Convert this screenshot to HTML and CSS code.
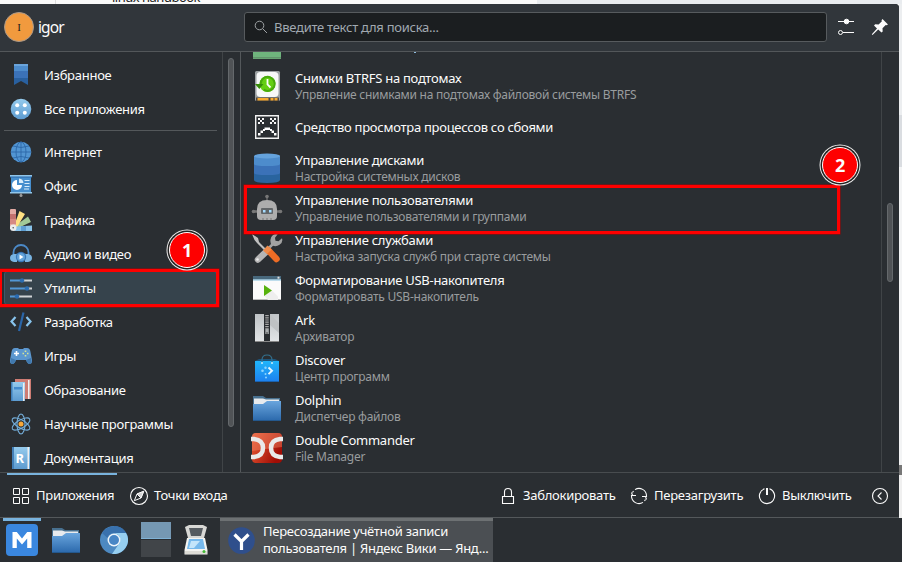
FILE: index.html
```html
<!DOCTYPE html>
<html lang="ru">
<head>
<meta charset="utf-8">
<title>Меню приложений</title>
<link rel="stylesheet" href="styles.css">
</head>
<body>
<svg width="0" height="0" class="defs">
  <defs>
    <linearGradient id="blue" x1="0" y1="0" x2="0" y2="1"><stop offset="0" stop-color="#69a5dd"/><stop offset="1" stop-color="#2a68ab"/></linearGradient>
    <linearGradient id="sky" x1="0" y1="0" x2="0" y2="1"><stop offset="0" stop-color="#95cbed"/><stop offset="1" stop-color="#5d9bd0"/></linearGradient>
    <linearGradient id="bag" x1="0" y1="0" x2="0" y2="1"><stop offset="0" stop-color="#20b5fb"/><stop offset="1" stop-color="#1d80ee"/></linearGradient>
    <linearGradient id="red" x1="0" y1="0" x2="1" y2="0.5"><stop offset="0" stop-color="#ec5e38"/><stop offset="1" stop-color="#a10d05"/></linearGradient>
    <linearGradient id="metal" x1="0" y1="0" x2="0" y2="1"><stop offset="0" stop-color="#bfc3c6"/><stop offset="1" stop-color="#e2e5e7"/></linearGradient>
    <symbol id="folder" viewBox="0 0 32 32">
      <path d="M2 4h10l3 2h14v8H2z" fill="#48708f"/>
      <path d="M3 6.500h9l3 1h13V14H3z" fill="#e8ebee"/>
      <path d="M2 12h10l4-3h14v20H2z" fill="url(#blue)"/>
      <path d="M2 28h28v1H2z" fill="#24588d"/>
    </symbol>
  </defs>
</svg>
<div class="screen">
  <div class="page"><div class="page-left"></div><div class="page-mid"><span class="bullet">•</span>linux handbook</div><div class="page-right"></div></div>
  <div class="desk">
    <main class="launcher">
      <header class="head">
        <div class="avatar">I</div>
        <div class="user">igor</div>
        <div class="search">
          <svg width="14" height="14" viewBox="0 0 14 14" fill="none" stroke="#a0a4a6"><circle cx="5.500" cy="5.500" r="4.300"/><path d="M8.700 8.700l4.300 4.300"/></svg>
          <span>Введите текст для поиска...</span>
        </div>
        <svg class="tune" width="18" height="18" viewBox="0 0 18 18" fill="none" stroke="#fcfcfc"><path d="M1 3.500h16M6 14.500h11"/><circle cx="9.500" cy="3.500" r="2.300" fill="#fcfcfc"/><circle cx="3.500" cy="14.500" r="2"/></svg>
        <svg class="pin" width="18" height="18" viewBox="0 0 18 18"><path d="M11.500 1l5.500 5.500-1.500.8-.8-.4-3.200 3.400.2 3.200-1.200 1.100-3.300-3.200L1.500 17l-.7-.7 5.200-5.800L3 7.500l1.200-1.200 3.400.2 3.300-3.300-.4-.9z" fill="#fcfcfc"/></svg>
      </header>
      <div class="content">
        <nav class="cats">
          <div class="cat"><svg viewBox="0 0 22 22"><path d="M4 0h14v21l-7-4-7 4z" fill="#29609f"/><path d="M4 0h14v14H4z" fill="#3b72b8"/><path d="M4 0h14v7H4z" fill="#4d8ccc"/><path d="M4 0h14v2H4z" fill="#6aa4db"/></svg>Избранное</div>
          <div class="cat"><svg viewBox="0 0 22 22"><circle cx="11" cy="11" r="10.300" fill="url(#sky)"/><g fill="#fff"><circle cx="7.200" cy="7.200" r="2"/><circle cx="14.800" cy="7.200" r="2"/><circle cx="7.200" cy="14.800" r="2"/><circle cx="14.800" cy="14.800" r="2"/></g></svg>Все приложения</div>
          <hr>
          <div class="cat"><svg viewBox="0 0 22 22"><circle cx="11" cy="11" r="10.300" fill="#5295d2"/><g fill="none" stroke="#2d68a8" stroke-width=".9"><ellipse cx="11" cy="11" rx="5" ry="10"/><path d="M11 1v20M1 11h20M3 5q8 3 16 0M3 17q8-3 16 0"/></g></svg>Интернет</div>
          <div class="cat"><svg viewBox="0 0 22 22"><path d="M1 1h20v17H1z" fill="#478fce"/><path d="M0 0h22v2H0zM0 17h22v1.500H0z" fill="#91c6ea"/><path d="M0 1.500h22v1H0z" fill="#2d68a8"/><path d="M7 5a5 5 0 1 0 5 5H7z" fill="#fff"/><path d="M9 3.500a5 5 0 0 1 4.500 4.500H9z" fill="#d8ecfa"/><path d="M14.500 5.500h5M14.500 8.500h5M14.500 11.500h5M14 14h5" stroke="#d8ecfa"/><path d="M11 18v3" stroke="#999"/><circle cx="11" cy="20.500" r="1.500" fill="#999"/></svg>Офис</div>
          <div class="cat"><svg viewBox="0 0 22 22"><path d="M5 17L18 7.500l3 5.500-15 7z" fill="#a2c997"/><path d="M4 17L9.500 2l5.500 3L6 20z" fill="#ffe082"/><path d="M4 22l2-4.500 16-1V22z" fill="#88c2e9"/><path d="M11 17h5v5h-5z" fill="#5f9fd3"/><path d="M0 1q0-1 1-1h4q1 0 1 1v17H0z" fill="#e2aaa3"/><path d="M0 5h6v5H0z" fill="#c3716e"/><path d="M0 10h6v5H0z" fill="#d68983"/><circle cx="3.200" cy="18.700" r="3.300" fill="#ececec"/><circle cx="3.200" cy="18.700" r=".8" fill="#555"/></svg>Графика</div>
          <div class="cat"><svg viewBox="0 0 22 22"><path d="M3.500 14V9.500a7.500 7.500 0 0 1 15 0V14" fill="none" stroke="#4b89c7" stroke-width="1.800"/><path d="M4 11h3v8H4q-4-.5-4-4t4-4M18 11h-3v8h3q4-.5 4-4t-4-4" fill="#79b4e2"/><circle cx="11" cy="14" r="5.200" fill="#3877b8"/><circle cx="11" cy="14" r="4" fill="#62a2d8"/><path d="M9.500 11.500v5L13.500 14z" fill="#fff"/></svg>Аудио и видео</div>
          <div class="cat active"><svg viewBox="0 0 22 22"><path d="M0 3.500h12M0 11.500h18M0 19.500h8" stroke="#5297d5" stroke-width="1.800"/><path d="M12 3.500h10M18 11.500h4M8 19.500h14" stroke="#cfd3d5" stroke-width="1.800"/><g fill="#2a6bb0"><circle cx="12" cy="3.500" r="2.200"/><circle cx="17" cy="11.500" r="2.200"/><circle cx="7" cy="19.500" r="2.200"/></g></svg>Утилиты</div>
          <div class="cat"><svg viewBox="0 0 22 22" fill="none"><path d="M5.500 6L1.500 10.500l4 4.500M16.500 6l4 4.500-4 4.500" stroke="#88c4ed" stroke-width="2.200"/><path d="M13.500 1.500L9 20" stroke="#2a66a9" stroke-width="2.200"/></svg>Разработка</div>
          <div class="cat"><svg viewBox="0 0 22 22"><path d="M5 3h3l1 1h4l1-1h3q3 0 3.500 4L22 15q.5 4-2.500 4-2 0-3.500-4H6q-1.500 4-3.500 4-3 0-2.500-4L1.500 7Q2 3 5 3" fill="#5c97cf"/><path d="M1 13l-.7 4q.5 2 2.200 2 2 0 3.500-4zM21 13l.7 4q-.5 2-2.200 2-2 0-3.500-4z" fill="#4179ad"/><path d="M6.500 6v5M4 8.500h5" stroke="#fff" stroke-width="1.600"/><path d="M15.500 5.500v1.500M15.500 10v1.500M12.500 8.500H14M17 8.500h1.500" stroke="#d5e495" stroke-width="1.600"/></svg>Игры</div>
          <div class="cat"><svg viewBox="0 0 22 22"><path d="M5 0h16v20H5z" fill="#ce7c73"/><path d="M18 1h1.500v19H18z" fill="#eee"/><path d="M1 3h14v19H1z" fill="url(#sky)"/><path d="M1 3h1.500v19H1z" fill="#3f7fb9"/><path d="M13 4h1.500v18H13z" fill="#eee"/><path d="M4 8h8v2.500H4z" fill="#438bce"/></svg>Образование</div>
          <div class="cat"><svg viewBox="0 0 22 22" fill="none" stroke="#75afdb" stroke-width="1.100"><g><ellipse cx="11" cy="11" rx="4" ry="10"/><ellipse cx="11" cy="11" rx="4" ry="10" transform="rotate(60 11 11)"/><ellipse cx="11" cy="11" rx="4" ry="10" transform="rotate(120 11 11)"/></g><circle cx="11" cy="11" r="2.500" fill="#f8a838" stroke="none"/></svg>Научные программы</div>
          <div class="cat"><svg viewBox="0 0 22 22"><path d="M2 0h18v22H2z" fill="url(#sky)"/><path d="M2 0h2v22H2z" fill="#427fb8"/><path d="M17.500 0H19v22h-1.500z" fill="#eee"/><text x="5.500" y="16" class="letter">R</text></svg>Документация</div>
        </nav>
        <div class="track left-track"><i></i></div>
        <section class="apps">
          <div class="app before"><svg viewBox="0 0 32 32"><path d="M2 4h28v25H2z" fill="#6fb47d"/><path d="M2 27h28v1.500H2z" fill="#62946c"/></svg><i class="tail"></i></div>
          <div class="app"><svg viewBox="0 0 32 32"><rect x="4" y="1" width="25" height="30" rx="1.500" fill="#9ba0a2"/><rect x="5.500" y="2" width="22" height="25" rx="4" fill="#f7f8f8"/><circle cx="16.500" cy="14" r="8" fill="#65cf13"/><path d="M9.700 14a7 7 0 1 1 3 5.600" fill="none" stroke="#48aa0d" stroke-width="2"/><path d="M4 14h8.500l-4.200 5z" fill="#378d08"/><path d="M16.500 9v5.500l3 3" fill="none" stroke="#fff" stroke-width="1.800"/><path d="M5 27.500h23V31H5z" fill="#4d453c"/><path d="M6.500 29.300h20" stroke="#f6aa30" stroke-width="2.500" stroke-dasharray="11 2 3 1"/></svg><div><b>Снимки BTRFS на подтомах</b><small>Упрвление снимками на подтомах файловой системы BTRFS</small></div></div>
          <div class="app single"><svg viewBox="0 0 32 32"><path d="M4.700 4.700h22.600v22.600H4.700z" fill="#2a2e32" stroke="#f1f1f1" stroke-width="1.400"/><g fill="#f5f5f5"><path id="x" d="M7 7h2v2H7zM11 7h2v2h-2zM9 9h2v2H9zM7 11h2v2H7zM11 11h2v2h-2z"/><use href="#x" x="12"/></g><path d="M7 22h2.500v2.500H7zM9.500 19.500H12V22H9.500zM12 18h2v2h-2zM13.500 16.500h5.500V19h-5.500zM19 18h2v2h-2zM20.500 19.500H23V22h-2.500zM23 22h2.500v2.500H23z" fill="#fff"/></svg><div><b>Средство просмотра процессов со сбоями</b></div></div>
          <div class="app"><svg viewBox="0 0 32 32"><path d="M3 4v24q0 3 13 3t13-3V4z" fill="#29649f"/><path d="M3 4v17q0 2 13 2t13-2V4z" fill="#3b72b8"/><path d="M3 4v8q0 2 13 2t13-2V4z" fill="#4d8ccc"/><ellipse cx="16" cy="4" rx="13" ry="2.500" fill="#65a3dd"/></svg><div><b>Управление дисками</b><small>Настройка системных дисков</small></div></div>
          <div class="app"><svg viewBox="0 0 32 32"><path d="M16 4v6" stroke="#777" stroke-width="1.200"/><circle cx="16" cy="4.500" r="1.800" fill="#777"/><path d="M3 19.500h26" stroke="#777" stroke-width="2.500"/><circle cx="2.500" cy="19.500" r="1.800" fill="#777"/><circle cx="29.500" cy="19.500" r="1.800" fill="#777"/><path d="M6 17q0-9 10-9t10 9v7q0 4-4 4H10q-4 0-4-4z" fill="#adadad"/><path d="M12 28v-2M16 28v-2M20 28v-2" stroke="#777"/><rect x="10" y="16" width="12" height="6" rx="1" fill="#626669"/><path d="M12 18h2.500v2.500H12zM18 18h2.500v2.500H18z" fill="#a4dcff"/></svg><div><b>Управление пользователями</b><small>Управление пользователями и группами</small></div></div>
          <div class="app"><svg viewBox="0 0 32 32" fill="none"><path d="M1 2l6 4 1 4 7 7-1.500 1.500L6 11 3.500 8z" fill="#c0c0c0"/><path d="M17 18l-10 9.500" stroke="#b5b5b5" stroke-width="6.500" stroke-linecap="round"/><path d="M14 18l6-6q-2-6 2-9 2-1.500 5-1.200l-3 4 .5 3 3 .5 3.500-3q1.300 4-2.500 6.500-3 2-6.500 1L16 20z" fill="#a2a2a2"/><path d="M17.500 18.500l8 8.500" stroke="#ed6c25" stroke-width="6.500" stroke-linecap="round"/><path d="M12 18.500l4.500-5 4 4-4.500 4.500z" fill="#ee8b4b"/><circle cx="6.500" cy="27.500" r="1.300" fill="#eee"/></svg><div><b>Управление службами</b><small>Настройка запуска служб при старте системы</small></div></div>
          <div class="app"><svg viewBox="0 0 32 32"><path d="M2 4h28v24H2z" fill="#fbfbfb"/><path d="M2 4h28v3.500H2z" fill="#48687c"/><path d="M2 7.500h28v1H2z" fill="#80bfdd"/><path d="M26.500 4.700h2v2h-2z" fill="#ddd"/><path d="M2 27h28v1H2z" fill="#bbb"/><path d="M21 18.500l6 6V28H17l-4-4.500z" fill="#eee"/><path d="M13 13v11l8-5.500z" fill="#57b20d"/></svg><div><b>Форматирование USB-накопителя</b><small>Форматировать USB-накопитель</small></div></div>
          <div class="app"><svg viewBox="0 0 32 32"><path d="M4 2h24v28H4z" fill="url(#metal)"/><path d="M19 2l9 9v10L19 13z" fill="#bfc2c4"/><path d="M13 2h6v27h-6z" fill="#292d31"/><path d="M16 3v14" stroke="#aaa" stroke-width="3.500" stroke-dasharray="1.200 1"/><path d="M14.300 17h3.500v5h-3.500z" fill="#a9adaf"/><path d="M15.500 20h1v2h-1z" fill="#444"/><path d="M4 29h24v1H4z" fill="#888"/></svg><div><b>Ark</b><small>Архиватор</small></div></div>
          <div class="app"><svg viewBox="0 0 32 32"><path d="M4 9l4-2h16l4 2v4H4z" fill="#1e557b"/><path d="M4 9h24v21H4z" fill="url(#bag)"/><path d="M4 29h24v1H4z" fill="#1b62ae"/><path d="M11 11V8q0-5 5-5t5 5v3" fill="none" stroke="#33718f" stroke-width="1.200"/><circle cx="11" cy="11" r="1" fill="#caf0ff"/><circle cx="21" cy="11" r="1" fill="#caf0ff"/><path d="M17.500 15.500l3.500 3.300-3.500 3.300" stroke="#e8f8ff" stroke-width="1.900" fill="none"/><g fill="#8dd5ff"><circle cx="14.500" cy="15.800" r="1.200"/><circle cx="11.500" cy="18.800" r="1.300"/><circle cx="14.500" cy="22" r="1"/><circle cx="15" cy="25.500" r="1"/></g></svg><div><b>Discover</b><small>Центр программ</small></div></div>
          <div class="app"><svg><use href="#folder"/></svg><div><b>Dolphin</b><small>Диспетчер файлов</small></div></div>
          <div class="app"><svg viewBox="0 0 32 32"><rect x="1" y="1" width="30" height="30" rx="4" fill="url(#red)"/><path d="M1 5q0-4 4-4h22q4 0 4 4v10Q16 17 1 19z" fill="#ef8664" opacity=".45"/><path d="M0 7h3q9 1 9 9t-9 9H0M32 7h-3q-9 1-9 9t9 9h3" fill="none" stroke="#e9e9e9" stroke-width="4.500"/></svg><div><b>Double Commander</b><small>File Manager</small></div></div>
        </section>
        <div class="track right-track"><i></i></div>
      </div>
      <footer class="foot">
        <div class="tab current"><svg width="18" height="18" viewBox="0 0 18 18" fill="none" stroke="#fcfcfc"><path d="M1.500 1.500h6v6h-6zM10.500 1.500h6v6h-6zM1.500 10.500h6v6h-6zM10.500 10.500h6v6h-6z"/></svg><span>Приложения</span></div>
        <div class="tab places"><svg width="20" height="20" viewBox="0 0 20 20" fill="none" stroke="#fcfcfc"><circle cx="10" cy="10" r="8.500" stroke-width="1.100"/><path d="M14.700 5.300L12 12l-6.700 2.700L8 8zM8 8l4 4"/><path d="M14.700 5.300L8 8l4 4z" fill="#fcfcfc" opacity=".8"/></svg><span>Точки входа</span></div>
        <div class="act lock"><svg width="18" height="18" viewBox="0 0 18 18" fill="none" stroke="#fcfcfc" stroke-width="1.100"><path d="M3.500 9.500h11v7h-11zM5.500 9.500V5q0-3.500 3.500-3.500T12.500 5v4.500"/></svg><span>Заблокировать</span></div>
        <div class="act restart"><svg width="18" height="18" viewBox="0 0 18 18" fill="none" stroke="#fcfcfc" stroke-width="1.100"><path d="M5 2.600a7.500 7.500 0 0 1 11.500 6.400v1M13 15.400A7.500 7.500 0 0 1 1.500 9V8M1.500 5.500l1 3H6M16.500 12.500l-1-3H12M2.500 5.500l1-1.500M15.500 12.500l-1 1.500"/></svg><span>Перезагрузить</span></div>
        <div class="act power"><svg width="18" height="18" viewBox="0 0 18 18" fill="none" stroke="#fcfcfc" stroke-width="1.100"><path d="M6.500 1.800a7.600 7.600 0 1 0 5 0"/><path d="M9 1v7" stroke-width="2"/></svg><span>Выключить</span></div>
        <svg class="back" width="18" height="18" viewBox="0 0 18 18" fill="none" stroke="#fcfcfc" stroke-width="1.100"><circle cx="9" cy="9" r="7.500"/><path d="M10.500 5.500L7 9l3.500 3.500"/></svg>
      </footer>
    </main>
    <aside class="edge"><i class="e1"></i><i class="e2"></i><i class="e3"></i><i class="e4"></i><i class="e5"></i></aside>
  </div>
  <div class="taskbar">
    <div class="start"><svg width="32" height="32" viewBox="0 0 32 32"><rect width="32" height="32" rx="4" fill="#3a87df"/><path d="M6.500 24V8h4.300l5.200 6.500L21.200 8h4.300v16h-4.300v-9.500L16 20.500l-5.200-6V24z" fill="#fff"/></svg></div>
    <svg class="t-folder" width="32" height="32"><use href="#folder"/></svg>
    <svg class="t-chrome" width="28" height="28" viewBox="0 0 28 28"><circle cx="14" cy="14" r="14" fill="#4d89c1"/><path d="M14 0a14 14 0 0 1 12 7H14z" fill="#326aa8"/><path d="M2 7A14 14 0 0 1 26 7H14a7 7 0 0 0-6.500 5z" fill="#3971ad"/><path d="M26 7a14 14 0 0 1-14 20.900l7.500-10.900A7 7 0 0 0 14 7z" fill="#97cff0"/><circle cx="14" cy="14" r="6.500" fill="#eef5fa"/><circle cx="14" cy="14" r="5" fill="#4886c5"/></svg>
    <div class="pager"><i></i><i></i></div>
    <svg class="t-scan" width="26" height="32" viewBox="0 0 26 32"><path d="M2 3l4-2h14l4 2-3 11H5z" fill="#d8d8d5"/><path d="M6 4h14l-2 8H8z" fill="#555b60"/><path d="M4 14h18l2.500 12v4.500h-23V26z" fill="#f4f4f1"/><path d="M6 15h14l2 10H4z" fill="#77b9ec"/><path d="M8 17h9l-6 7H6z" fill="#c4e5fa"/><path d="M2 27h22v3H2z" fill="#dddcd6"/><circle cx="21" cy="27.500" r="1.500" fill="#42ba35"/></svg>
    <div class="task"><svg width="27" height="27" viewBox="0 0 27 27"><circle cx="13.500" cy="13.500" r="13.300" fill="#2f4f8c"/><path d="M6.500 7.500l7 7 7-7M13.500 14v9" fill="none" stroke="#fff" stroke-width="3.200"/></svg><p>Пересоздание учётной записи<br>пользователя | Яндекс Вики — Янд...</p></div>
  </div>
  <div class="frame frame-1"></div><div class="frame frame-2"></div>
  <div class="badge badge-1">1</div><div class="badge badge-2">2</div>
</div>
</body>
</html>
```
FILE: styles.css
```css
* { box-sizing: border-box; }
body { margin: 0; }
svg { display: block; flex: none; }
.defs { position: absolute; }
.screen {
  position: relative; width: 902px; height: 562px; overflow: hidden;
  display: flex; flex-direction: column;
  font: 13px/16px "Noto Sans", sans-serif; letter-spacing: -.27px; color: #fcfcfc; background: #2a2e32;
}
.page { display: flex; flex: none; height: 4px; overflow: hidden; background: #fafafa; color: #222; }
.page-left { width: 56px; border-right: 1px solid #ddd; }
.page-mid { width: 481px; padding-left: 38px; line-height: 16px; margin-top: -11px; height: 20px; white-space: pre; letter-spacing: -.5px; }
.bullet { display: inline-block; width: 18px; }
.page-right { flex: 1; background: #e9ecef; }
.desk { display: flex; height: 514px; flex: none; background: #fafafa; }
.launcher { width: 899px; display: flex; flex-direction: column; background: #2a2e32; border-bottom: 1px solid #54585b; border-top-right-radius: 4px; overflow: hidden; }
.head { display: flex; align-items: center; flex: none; height: 48px; background: #31363b; border-bottom: 1px solid #53575a; padding-left: 4px; }
.avatar { width: 30px; height: 30px; margin-top: -1px; border-radius: 50%; background: #f19a3e; border: 1px solid #a9998a; color: #1d1d1d; font: 11px/28px "Liberation Serif", serif; text-align: center; }
.user { width: 206px; margin-left: 4px; font-size: 15.500px; letter-spacing: -.9px; margin-top: -2px; letter-spacing: -.9px; }
.search { display: flex; align-items: center; width: 583px; height: 30px; margin-top: -2px; border: 1px solid #575b5e; border-radius: 3px; background: #1b1e20; color: #a1a9b1; padding-left: 9px; gap: 6px; }
.tune { margin: -2px 0 0 10px; }
.pin { margin: -2px 0 0 16px; }
.content { display: flex; flex: none; height: 421px; border-bottom: 1px solid #484c4f; overflow: hidden; }
.cats { width: 222px; padding: 6px 5px 0 4px; }
.cat { display: flex; align-items: center; height: 34px; padding-left: 6px; white-space: nowrap; }
.cat svg { width: 22px; height: 22px; margin-right: 12px; }
.cats hr { height: 1px; border: 0; margin: 4px 0; background: #54585b; }
.active { background: #36434c; border: 1px solid #3b5a6c; border-radius: 3px; padding-left: 5px; }
.letter { font: bold 13px "Noto Sans", sans-serif; fill: #fff; }
.track { border-left: 1px solid #404447; }
.track i { display: block; width: 6px; border: 1px solid #65696c; border-radius: 3px; background: #505356; }
.left-track { width: 19px; padding: 6px 0 0 5px; border-right: 1px solid #54585b; }
.left-track i { height: 369px; }
.right-track { width: 18px; padding: 151px 0 0 5px; }
.right-track i { height: 79px; }
.apps { width: 640px; }
.app { display: flex; align-items: center; height: 40px; padding-left: 10px; white-space: nowrap; }
.before { margin-top: -26px; }
.tail { width: 2px; height: 1px; margin: 12px 0 0 119px; background: #8fbde0; }
.single { height: 42px; padding-bottom: 1px; }
.app svg { width: 32px; height: 32px; margin-right: 12px; }
.app b { display: block; font-weight: 400; line-height: 16px; margin-top: 1px; }
.app small { display: block; font-size: 12px; line-height: 17px; letter-spacing: -.25px; color: #999c9e; }
.single b { margin: 0; }
.foot { display: flex; height: 44px; position: relative; }
.foot > div { display: flex; align-items: center; height: 45px; white-space: nowrap; }
.foot span { margin-top: -2px; }
.current { width: 110px; margin-left: 7px; padding: 0 0 0 5px; gap: 6px; box-shadow: inset 0 2px #79b3de; }
.places { width: 373px; padding-left: 12px; gap: 5px; }
.act { gap: 6px; }
.lock { width: 130px; margin-left: 9px; }
.restart { width: 128px; margin-left: 1px; }
.power { width: 113px; }
.foot .back { margin-top: 14px; }
.edge { width: 3px; display: flex; flex-direction: column; background: #f3f4f5; }
.e1 { height: 111px; background: #eceef0; }
.e2 { height: 52px; background: #dadde1; }
.e3 { height: 298px; }
.e4 { height: 10px; background: #777; }
.e5 { height: 43px; background: #f0f0f0; }
.taskbar { height: 44px; display: flex; align-items: flex-start; }
.start { width: 38px; height: 44px; margin-left: 3px; border-top: 3px solid #79b3de; padding: 3px 0 0 3px; }
.t-folder { margin: 6px 0 0 9px; }
.t-chrome { margin: 8px 0 0 18px; }
.pager { margin: 4px 0 0 13px; width: 30px; display: flex; flex-direction: column; gap: 1px; }
.pager i { height: 17px; background: #414549; }
.pager i:first-child { background: #7598b3; border-bottom: 1px solid #7fb2d6; }
.t-scan { margin: 6px 0 0 12px; }
.task { width: 273px; height: 44px; margin-left: 11px; background: #4b4f53; border-top: 3px solid #6d7173; display: flex; padding-left: 8px; }
.task svg { margin-top: 6px; }
.task p { margin: 2px 0 0 8px; line-height: 17px; white-space: nowrap; }
.frame { position: absolute; border: 3px solid #fe0000; box-shadow: 0 0 0 .5px #a00; }
.frame-1 { left: -1px; top: 269px; width: 220px; height: 38px; }
.frame-2 { left: 244px; top: 185px; width: 596px; height: 49px; }
.badge { position: absolute; width: 36px; height: 36px; border-radius: 50%; background: #fe0000; border: 1px solid #fff; box-shadow: 0 0 0 1.500px #222, 0 0 0 2.500px #eee; font: bold 18px/34px "Noto Sans", sans-serif; text-align: center; }
.badge-1 { left: 169px; top: 232px; }
.badge-2 { left: 822px; top: 147px; }
```
